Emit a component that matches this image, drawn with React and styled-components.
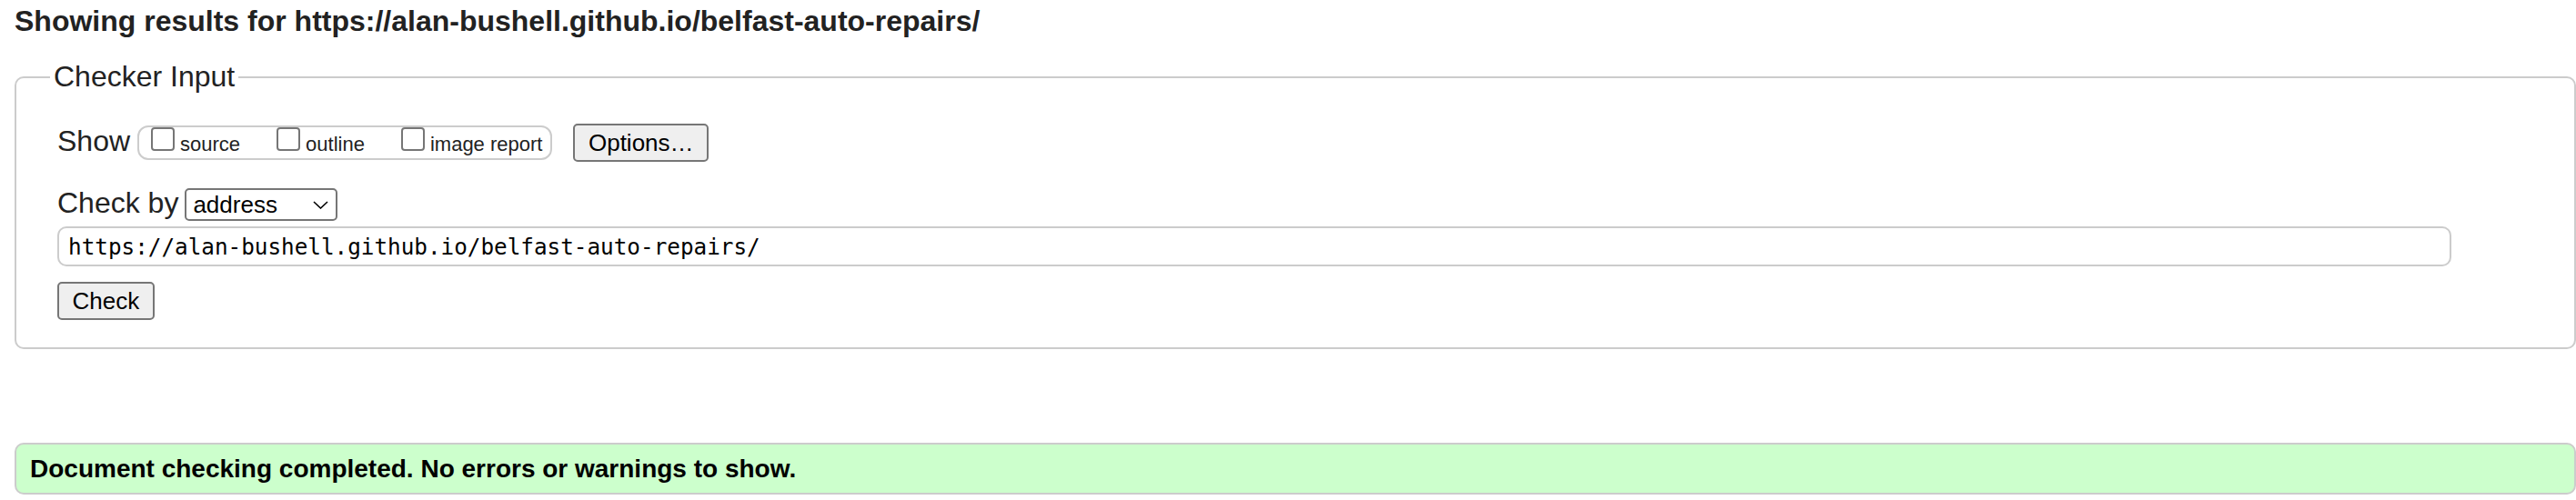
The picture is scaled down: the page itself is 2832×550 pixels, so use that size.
import React from 'react';
import styled, { createGlobalStyle } from 'styled-components';

const GlobalStyle = createGlobalStyle`
  html, body { margin: 0; padding: 0; background: #fff; }
  body { font-family: "Liberation Sans", Arial, sans-serif; color: #222; }
`;

const Page = styled.div`
  padding: 0 0 0 16px;
`;

const Heading = styled.h2`
  margin: 5px 0 24px;
  font-size: 32px;
  line-height: 37px;
  font-weight: bold;
`;

const Fieldset = styled.fieldset`
  margin: 0;
  padding: 33px 0 30px 45px;
  border: 2px solid #ccc;
  border-radius: 10px;
  min-width: 0;
`;

const Legend = styled.legend`
  padding: 0 4px;
  margin-left: -8px;
  font-size: 32px;
  line-height: 37px;
`;

const Row = styled.div`
  display: flex;
  align-items: baseline;
  margin-top: ${p => p.$top || 0}px;
`;

const FieldLabel = styled.span`
  font-size: 32px;
  line-height: 37px;
  margin-right: ${p => p.$gap}px;
`;

const CheckGroup = styled.div`
  display: inline-flex;
  align-items: baseline;
  gap: 40px;
  border: 2px solid #ccc;
  border-radius: 12px;
  padding: 0 9px 3px 13px;
`;

const CheckLabel = styled.label`
  display: inline-flex;
  align-items: baseline;
  font-size: 22px;
  line-height: 25px;
  color: #222;
`;

const Checkbox = styled.input.attrs({ type: 'checkbox' })`
  appearance: none;
  -webkit-appearance: none;
  box-sizing: border-box;
  width: 26px;
  height: 26px;
  margin: 0 6px 0 0;
  border: 2px solid #767676;
  border-radius: 4px;
  background: #fff;
`;

const Button = styled.button`
  font-family: "Liberation Sans", Arial, sans-serif;
  font-size: 26px;
  line-height: 30px;
  padding: 4px 14.5px;
  border: 2px solid #767676;
  border-radius: 5px;
  background: #efefef;
  color: #000;
  margin-left: ${p => p.$left || 0}px;
`;

const SelectWrap = styled.span`
  position: relative;
  display: inline-block;
`;

const Select = styled.select`
  appearance: none;
  -webkit-appearance: none;
  box-sizing: border-box;
  width: 168px;
  height: 36px;
  padding: 0 30px 0 7px;
  font-family: "Liberation Sans", Arial, sans-serif;
  font-size: 26px;
  border: 2px solid #767676;
  border-radius: 5px;
  background: #fff;
  color: #000;
`;

const Chevron = styled.svg`
  position: absolute;
  right: 10px;
  top: 14px;
  pointer-events: none;
`;

const UrlInput = styled.input`
  display: block;
  box-sizing: border-box;
  width: 2632px;
  height: 44px;
  margin: 6px 0 0;
  padding: 0 10px;
  border: 2px solid #ccc;
  border-radius: 10px;
  font-family: "DejaVu Sans Mono", "Liberation Mono", monospace;
  font-size: 24.3px;
  color: #000;
  background: #fff;
`;

const SubmitRow = styled.div`
  margin-top: 17px;
`;

const Message = styled.div`
  margin-top: 103px;
  background: #ccffcc;
  border: 2px solid #ccc;
  border-radius: 10px;
  padding: 10px 15px;
  font-size: 28px;
  line-height: 33px;
  font-weight: bold;
  color: #000;
`;

const url = 'https://alan-bushell.github.io/belfast-auto-repairs/';

export default function App() {
  return (
    <Page>
      <GlobalStyle />
      <Heading>Showing results for {url}</Heading>
      <Fieldset>
        <Legend>Checker Input</Legend>
        <Row>
          <FieldLabel $gap={8}>Show</FieldLabel>
          <CheckGroup>
            <CheckLabel><Checkbox />source</CheckLabel>
            <CheckLabel><Checkbox />outline</CheckLabel>
            <CheckLabel><Checkbox />image report</CheckLabel>
          </CheckGroup>
          <Button type="button" $left={23}>Options…</Button>
        </Row>
        <Row $top={27}>
          <FieldLabel $gap={7}>Check by</FieldLabel>
          <SelectWrap>
            <Select defaultValue="address">
              <option value="address">address</option>
              <option value="upload">file upload</option>
              <option value="input">text input</option>
            </Select>
            <Chevron width="17" height="9" viewBox="0 0 17 9">
              <polyline points="1,1 8.5,8 16,1" fill="none" stroke="#000" strokeWidth="1.6" />
            </Chevron>
          </SelectWrap>
        </Row>
        <UrlInput type="url" defaultValue={url} readOnly />
        <SubmitRow>
          <Button type="button">Check</Button>
        </SubmitRow>
      </Fieldset>
      <Message>Document checking completed. No errors or warnings to show.</Message>
    </Page>
  );
}
